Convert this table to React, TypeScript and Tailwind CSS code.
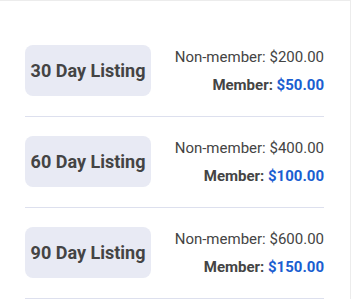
import React from 'react';

const plans = [
  { days: 30, non: '$200.00', member: '$50.00' },
  { days: 60, non: '$400.00', member: '$100.00' },
  { days: 90, non: '$600.00', member: '$150.00' },
];

export default function App() {
  return (
    <div className="w-[351px] h-[299px] bg-white border-t border-r border-[#ececec] overflow-hidden font-['Roboto',sans-serif]">
      <div className="pt-[25px] pl-[25px] pr-[26px]">
        {plans.map((p) => (
          <div key={p.days} className="pt-[19px] pb-5 border-b border-[#dde0ee]">
            <div className="h-[51px] flex items-center justify-between">
              <div className="w-[126px] h-[51px] rounded-lg bg-[#e8eaf4] flex items-center justify-center">
                <span className="text-[18px] font-bold text-[#444]">{p.days} Day Listing</span>
              </div>
              <div className="flex flex-col items-end text-[15px] text-[#444] leading-[28px]">
                <span>Non-member: {p.non}</span>
                <span className="font-bold">
                  Member: <span className="text-[#1a5ed1]">{p.member}</span>
                </span>
              </div>
            </div>
          </div>
        ))}
      </div>
    </div>
  );
}
